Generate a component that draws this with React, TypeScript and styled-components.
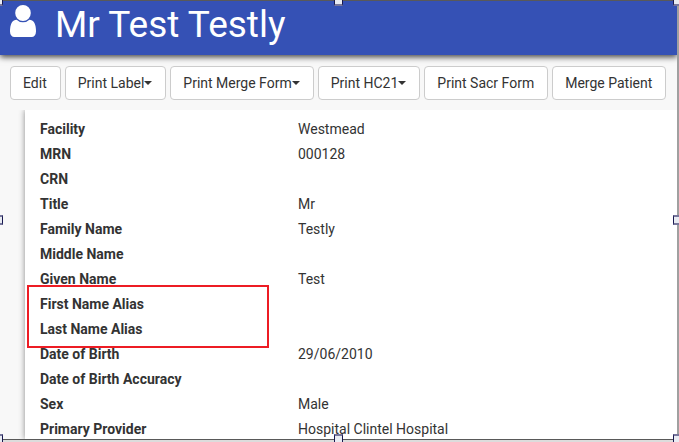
import React from "react";
import styled, { createGlobalStyle, css } from "styled-components";

const GlobalStyle = createGlobalStyle`
  *, *::before, *::after { box-sizing: border-box; }
  body {
    margin: 0;
    overflow: hidden;
    background: #f8f8f8;
    color: #333;
    font: 14px/20px Roboto, "Liberation Sans", sans-serif;
  }
`;

const Frame = styled.div`
  position: relative;
  display: flex;
  flex-direction: column;
  height: 100vh;
  border-top: 1px solid #595959;
  border-right: 2px solid #a0a0a0;
  border-bottom: 2px solid #dcdcdc;
`;

const Viewport = styled.div`
  display: flex;
  flex: 1;
  flex-direction: column;
  min-height: 0;
  overflow: hidden;
  border-bottom: 1px solid #595959;
`;

const Header = styled.header`
  position: relative;
  display: flex;
  flex: none;
  align-items: flex-start;
  gap: 19px;
  padding: 4px 10px 10px;
  background: #3551b5;
  box-shadow: 0 2px 6px rgba(0, 0, 0, 0.75);
`;

const UserIcon = styled.svg`
  width: 26px;
  height: 32px;
  fill: #fff;
`;

const PatientName = styled.h1`
  margin: 0;
  color: #fff;
  font-size: 37px;
  font-weight: 400;
  line-height: 40px;
`;

const Toolbar = styled.nav`
  display: flex;
  flex: none;
  gap: 4px;
  padding: 11px 10px 10px;
`;

const ToolButton = styled.button`
  display: inline-flex;
  align-items: center;
  height: 34px;
  padding: 0 13px 0 12px;
  border: 1px solid #ccc;
  border-radius: 4px;
  background: #fff;
  color: #333;
  font: inherit;
  white-space: nowrap;
`;

const Caret = styled.span`
  border-top: 4px solid #333;
  border-right: 4px solid transparent;
  border-left: 4px solid transparent;
`;

const Content = styled.main`
  display: flex;
  flex: 1;
  min-height: 0;
  padding-left: 25px;
  overflow: hidden;
`;

const Details = styled.dl`
  flex: 1;
  margin: 0;
  padding: 7px 15px;
  background: #fff;
  box-shadow: 0 0 6px rgba(0, 0, 0, 0.45);
`;

const Row = styled.div`
  display: grid;
  grid-template-columns: minmax(0, 258px) 1fr;
  min-height: 25px;
  line-height: 25px;
`;

const Label = styled.dt`
  font-weight: 700;
`;

const Value = styled.dd`
  margin: 0;
`;

const Anchor = styled.div`
  position: relative;
  height: 0;
`;

const Highlight = styled.div`
  position: absolute;
  top: -7px;
  left: -13px;
  width: 242px;
  height: 63px;
  border: 2px solid #ed1c24;
  pointer-events: none;
`;

type Spot = "topLeft" | "top" | "topRight" | "left" | "right" | "bottomLeft" | "bottom" | "bottomRight";

const spots = {
  topLeft: css`top: -5px; left: -6px;`,
  top: css`top: -5px; left: calc(50% - 5px);`,
  topRight: css`top: -5px; right: -5px;`,
  left: css`top: calc(50% - 6px); left: -6px;`,
  right: css`top: calc(50% - 6px); right: -5px;`,
  bottomLeft: css`bottom: -4px; left: -6px;`,
  bottom: css`bottom: -4px; left: calc(50% - 5px);`,
  bottomRight: css`bottom: -4px; right: -5px;`,
};

const Handle = styled.span<{ $spot: Spot }>`
  position: absolute;
  width: 9px;
  height: 10px;
  border: 1px solid #17174f;
  border-width: 2px 1px;
  border-top-color: #77779c;
  border-bottom-color: #77779c;
  background: #e8ebf2;
  ${({ $spot }) => spots[$spot]}
`;

const actions = [
  { label: "Edit" },
  { label: "Print Label", menu: true },
  { label: "Print Merge Form", menu: true },
  { label: "Print HC21", menu: true },
  { label: "Print Sacr Form" },
  { label: "Merge Patient" },
];

const fields = [
  { label: "Facility", value: "Westmead" },
  { label: "MRN", value: "000128" },
  { label: "CRN", value: "" },
  { label: "Title", value: "Mr" },
  { label: "Family Name", value: "Testly" },
  { label: "Middle Name", value: "" },
  { label: "Given Name", value: "Test" },
  { label: "First Name Alias", value: "", highlight: true },
  { label: "Last Name Alias", value: "" },
  { label: "Date of Birth", value: "29/06/2010" },
  { label: "Date of Birth Accuracy", value: "" },
  { label: "Sex", value: "Male" },
  { label: "Primary Provider", value: "Hospital Clintel Hospital" },
];

export default function App() {
  return (
    <Frame>
      <GlobalStyle />
      <Viewport>
        <Header>
          <UserIcon viewBox="0 128 1280 1536" preserveAspectRatio="none" aria-hidden="true">
            <path d="M1280 1399q0 109-62.5 187t-150.5 78h-854q-88 0-150.5-78t-62.5-187q0-85 8.5-160.5t31.5-152 58.5-131 94-89 134.5-34.5q131 128 313 128t313-128q76 0 134.5 34.5t94 89 58.5 131 31.5 152 8.5 160.5zm-256-887q0 159-112.5 271.5t-271.5 112.5-271.5-112.5-112.5-271.5 112.5-271.5 271.5-112.5 271.5 112.5 112.5 271.5z" />
          </UserIcon>
          <PatientName>Mr Test Testly</PatientName>
        </Header>
        <Toolbar>
          {actions.map(({ label, menu }) => (
            <ToolButton key={label} type="button" aria-haspopup={menu ? "menu" : undefined}>
              {label}
              {menu && <Caret />}
            </ToolButton>
          ))}
        </Toolbar>
        <Content>
          <Details>
            {fields.map(({ label, value, highlight }) => (
              <React.Fragment key={label}>
                {highlight && (
                  <Anchor>
                    <Highlight />
                  </Anchor>
                )}
                <Row>
                  <Label>{label}</Label>
                  <Value>{value}</Value>
                </Row>
              </React.Fragment>
            ))}
          </Details>
        </Content>
      </Viewport>
      {(Object.keys(spots) as Spot[]).map((spot) => (
        <Handle key={spot} $spot={spot} />
      ))}
    </Frame>
  );
}
